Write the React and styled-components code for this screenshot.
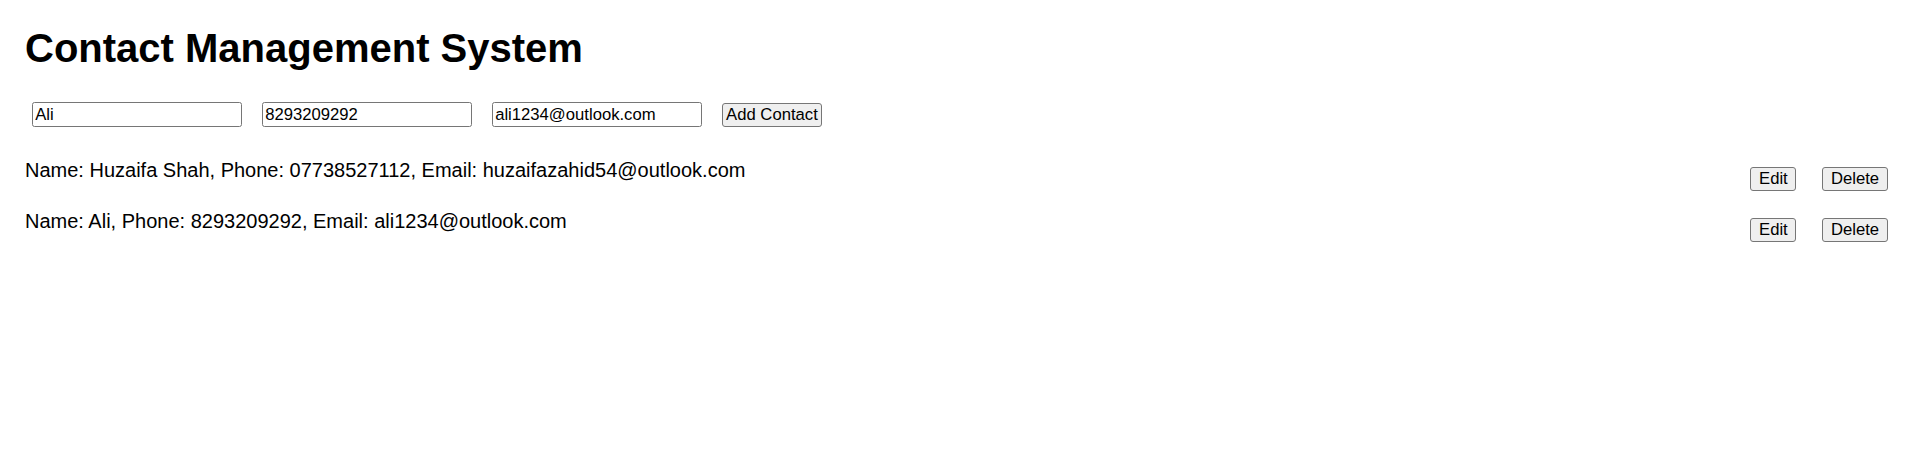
import React, { useState } from "react";
import styled, { createGlobalStyle } from "styled-components";

const Global = createGlobalStyle`
  html, body { margin: 0; padding: 0; background: #fff; }
  body { font-family: "Liberation Sans", Arial, sans-serif; color: #000; }
`;

const Page = styled.div`
  padding: 24.5px 32px 0 25px;
`;

const Title = styled.h1`
  margin: 0;
  font-size: 40px;
  line-height: 46px;
  font-weight: 700;
`;

const Form = styled.div`
  display: flex;
  align-items: center;
  gap: 19.4px;
  margin: 31.8px 0 0 6.7px;
`;

const Input = styled.input`
  box-sizing: border-box;
  width: 210.6px;
  height: 25px;
  padding: 1px 2.5px;
  border: 1px solid #767676;
  border-radius: 2.5px;
  font-family: "Liberation Sans", Arial, sans-serif;
  font-size: 16.67px;
  color: #000;
  background: #fff;
  outline: none;
`;

const Button = styled.button`
  box-sizing: border-box;
  height: ${(p) => p.$h || "24.5px"};
  width: ${(p) => p.$w};
  padding: 0;
  border: 1px solid #767676;
  border-radius: 3px;
  background: #efefef;
  font-family: "Liberation Sans", Arial, sans-serif;
  font-size: 16.67px;
  color: #000;
  cursor: pointer;
`;

const List = styled.ul`
  list-style: none;
  margin: 32px 0 0;
  padding: 0;
`;

const Row = styled.li`
  display: flex;
  justify-content: space-between;
  align-items: flex-start;
  margin-bottom: 18.8px;
`;

const RowText = styled.span`
  font-size: 20px;
  line-height: 23px;
`;

const Actions = styled.div`
  display: flex;
  gap: 25.6px;
  margin-top: 7.5px;
`;

export default function App() {
  const [contacts] = useState([
    { name: "Huzaifa Shah", phone: "07738527112", email: "huzaifazahid54@outlook.com" },
    { name: "Ali", phone: "8293209292", email: "ali1234@outlook.com" },
  ]);
  const [name, setName] = useState("Ali");
  const [phone, setPhone] = useState("8293209292");
  const [email, setEmail] = useState("ali1234@outlook.com");

  return (
    <Page>
      <Global />
      <Title>Contact Management System</Title>
      <Form>
        <Input value={name} onChange={(e) => setName(e.target.value)} />
        <Input value={phone} onChange={(e) => setPhone(e.target.value)} />
        <Input value={email} onChange={(e) => setEmail(e.target.value)} />
        <Button $w="100.6px">Add Contact</Button>
      </Form>
      <List>
        {contacts.map((c, i) => (
          <Row key={i}>
            <RowText>
              Name: {c.name}, Phone: {c.phone}, Email: {c.email}
            </RowText>
            <Actions>
              <Button $w="46px">Edit</Button>
              <Button $w="66px">Delete</Button>
            </Actions>
          </Row>
        ))}
      </List>
    </Page>
  );
}
